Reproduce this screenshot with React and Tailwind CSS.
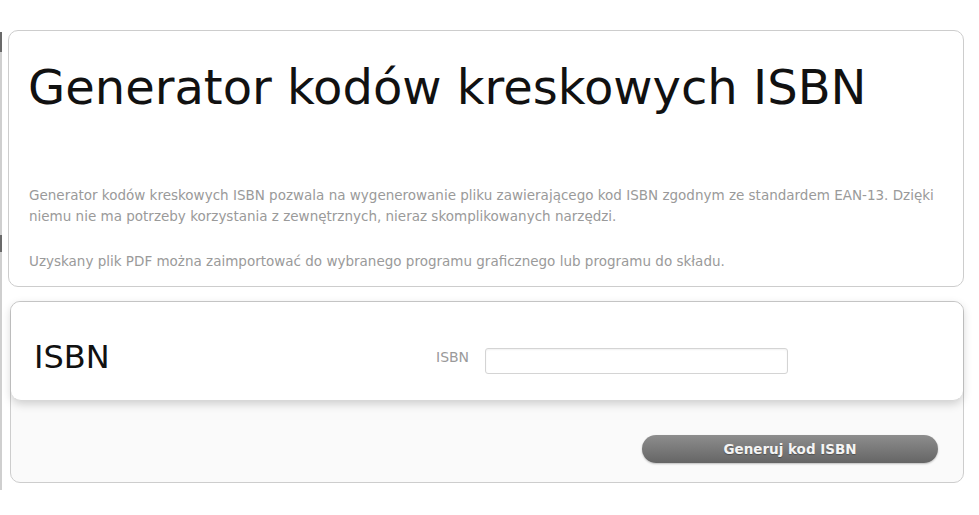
import React from "react";

const font = { fontFamily: '"DejaVu Sans", Verdana, sans-serif' };

const App = () => {
  return (
    <div
      className="flex h-[515px] w-[979px] bg-white pt-[30px] overflow-hidden"
      style={font}
    >
      {/* left edge strip */}
      <div className="mt-[2px] flex h-[458px] w-[2px] flex-col">
        <div className="h-[20px] bg-[#6a6a6a]" />
        <div className="h-[183px] bg-[#cfcfcf]" />
        <div className="h-[17px] bg-[#6a6a6a]" />
        <div className="flex-1 bg-[#cfcfcf]" />
      </div>

      <div className="ml-[6px] w-[956px]">
        {/* intro card */}
        <div className="h-[257px] rounded-[10px] border border-[#cdcdcd] bg-white px-[20px] pt-[27px]">
          <h1 className="-ml-[1px] text-[48px] leading-[58px] text-[#111] whitespace-nowrap">
            Generator kodów kreskowych ISBN
          </h1>
          <div className="mt-[69px] text-[13.5px] leading-[21px] text-[#9a9a9a] whitespace-nowrap">
            <p>
              Generator kodów kreskowych ISBN pozwala na wygenerowanie pliku
              zawierającego kod ISBN zgodnym ze standardem EAN-13. Dzięki
              <br />
              niemu nie ma potrzeby korzystania z zewnętrznych, nieraz
              skomplikowanych narzędzi.
            </p>
            <p className="mt-[24px]">
              Uzyskany plik PDF można zaimportować do wybranego programu
              graficznego lub programu do składu.
            </p>
          </div>
        </div>

        {/* form card */}
        <div className="ml-[2px] mt-[14px] w-[954px] rounded-[10px] border border-[#cdcdcd] bg-[#fafafa]">
          <div className="flex h-[99px] items-center rounded-t-[9px] rounded-b-[10px] border-b border-[#d8d8d8] bg-white pl-[23px] pt-[20px] shadow-[0_3px_10px_rgba(0,0,0,0.18)]">
            <div className="mb-[8px] w-[402px] shrink-0 text-[32px] leading-[40px] text-[#111]">
              ISBN
            </div>
            <label className="mb-[8px] text-[14px] leading-[20px] text-[#9a9a9a]">
              ISBN
            </label>
            <input
              type="text"
              className="ml-[16px] h-[26px] w-[303px] rounded-[3px] border border-[#d4d4d4] bg-white shadow-[inset_0_1px_2px_rgba(0,0,0,0.06)] outline-none"
            />
          </div>
          <div className="flex justify-end pb-[19px] pr-[25px] pt-[34px]">
            <button className="h-[28px] w-[296px] rounded-full bg-gradient-to-b from-[#8e8e8e] to-[#656565] text-[13.5px] font-bold text-[#f4f4f4] [text-shadow:0_1px_1px_rgba(0,0,0,0.3)] shadow-[0_1px_2px_rgba(0,0,0,0.25)]">
              Generuj kod ISBN
            </button>
          </div>
        </div>
      </div>
    </div>
  );
};

export default App;
